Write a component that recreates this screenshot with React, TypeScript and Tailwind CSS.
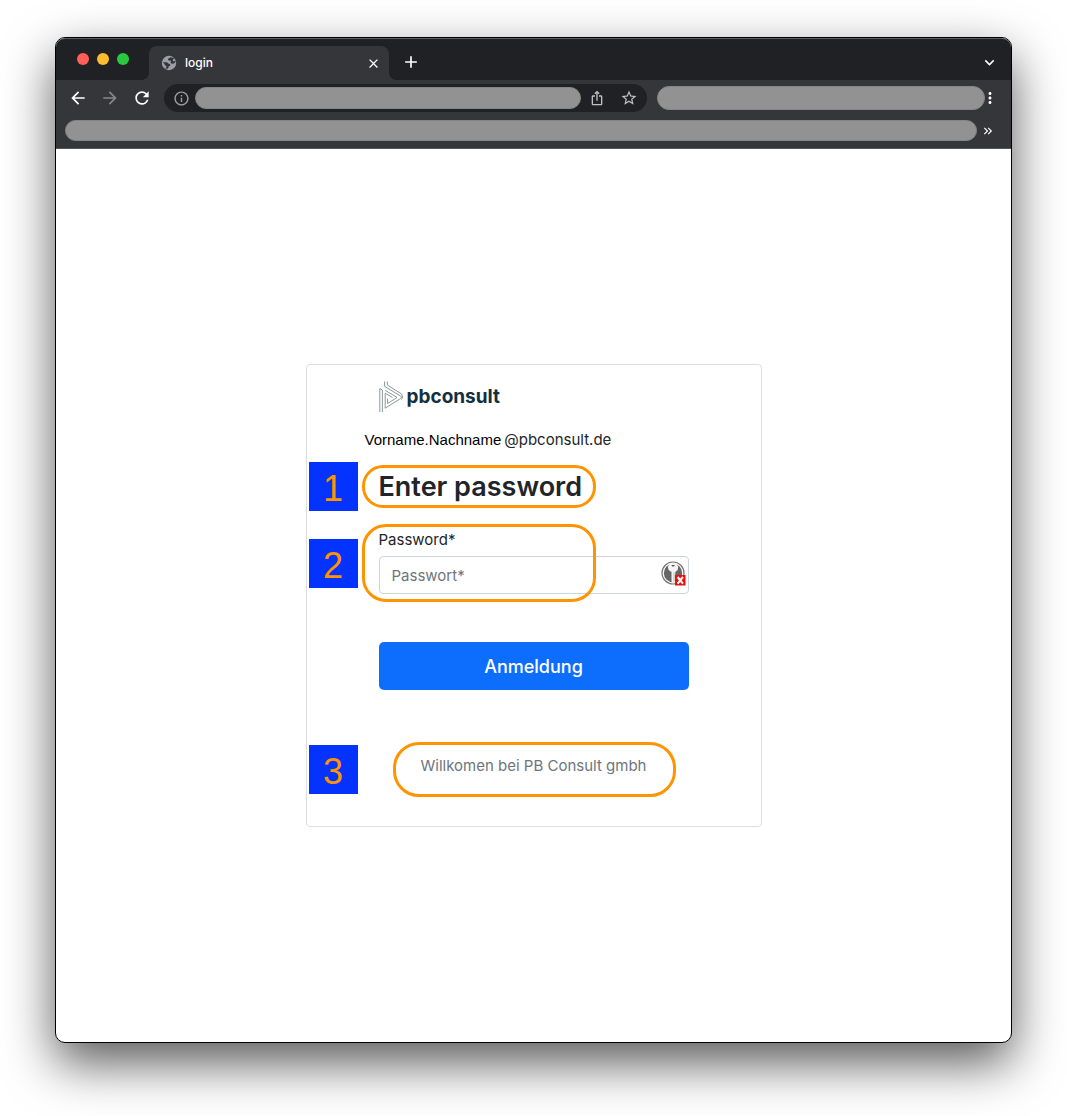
import type { ReactNode } from "react";
import {
  MdAdd,
  MdArrowBack,
  MdArrowForward,
  MdClose,
  MdExpandMore,
  MdInfoOutline,
  MdIosShare,
  MdKeyboardDoubleArrowRight,
  MdMoreVert,
  MdRefresh,
  MdStarBorder,
} from "react-icons/md";

function StepNumber({ children, className }: { children: ReactNode; className: string }) {
  return (
    <span
      className={`absolute flex size-[49px] items-center justify-center bg-[#0433ff] pt-1 font-['Liberation_Sans',Arial,sans-serif] text-[36px] leading-none text-[#ff9300] ${className}`}
    >
      {children}
    </span>
  );
}

function Highlight({ className }: { className: string }) {
  return <span className={`pointer-events-none absolute border-[3px] border-[#ff9300] ${className}`} />;
}

function GlobeIcon() {
  return (
    <svg width="16" height="16" viewBox="0 0 16 16" aria-hidden="true">
      <circle cx="8" cy="8" r="7.2" fill="#9aa0a6" />
      <path
        d="M9.8 2.2L7.4 3.6c-.8.7-.4 1.7.5 1.9l1.7.3c.7.4.4 1.5-.3 1.7l.9 1.1 2.1.2 1.9-1.2.5-1.1-.9-.6-1.1.5-.9-.7.2-1.3 1.3-.7A6.4 6.4 0 0 0 9.8 2.2z"
        fill="#35363a"
      />
      <path
        d="M1.7 7.2h3.4c1.6.1 2 .8 2.4 1.6l1.3.1c.8.5.7 1.6-.2 2.1l-1.1.4v1.3l-1.4 1.2A6.4 6.4 0 0 1 4 12.8h1.4v-1.6l-1.6-1.1-.4-1.2z"
        fill="#35363a"
      />
    </svg>
  );
}

function BrandMark() {
  return (
    <svg width="24" height="32" viewBox="0 0 24 32" fill="none" stroke="#8b979e" strokeWidth="1">
      <path d="M0.8 31V7.5L3.4 9V31" />
      <path d="M5.6 0.5V5.4L21.6 15Q23.6 16.2 21.6 17.5L6.2 27.2V12.2L13.4 16.4" />
      <path d="M8.3 0.5V4L22.6 13Q24.6 16.2 22.6 18.6" />
      <path d="M8.6 22.6V17.5M8.6 22.6L18 16.4L6.2 9.4" />
    </svg>
  );
}

function KeyBadge() {
  return (
    <svg width="25" height="25" viewBox="0 0 25 25" aria-hidden="true">
      <circle cx="12" cy="12" r="11" fill="#fff" stroke="#757575" strokeWidth="1.2" />
      <circle cx="12" cy="12" r="9.2" fill="#666" />
      <path d="M8.8 2.8h6.4l2 3-.5 3.2-2.4 2v9.8l-1.8 1.2-2-1.3v-9.7l-2.9-2L6.8 5.8z" fill="#f4f4f4" />
      <path d="M10.3 4h3.6l-1 1.4h-1.6z" fill="#555" />
      <path d="M13 11.5v9.3" stroke="#aaa" strokeWidth="0.8" />
      <rect x="14" y="14" width="10.5" height="10.5" fill="#f20d0d" />
      <path d="M16.6 16l5.3 6.6M21.9 16l-5.3 6.6" stroke="#fff" strokeWidth="2" />
    </svg>
  );
}

function TabStrip() {
  return (
    <div className="flex h-[42px] items-end rounded-t-[9px] border-t border-[#5c5d60] bg-[#202124] pr-3 pl-[21px]">
      <div className="mb-[15px] flex gap-2">
        <button aria-label="Close window" className="size-3 rounded-full bg-[#ff5f57]" />
        <button aria-label="Minimize window" className="size-3 rounded-full bg-[#febc2e]" />
        <button aria-label="Zoom window" className="size-3 rounded-full bg-[#28c840]" />
      </div>
      <div className="ml-3 size-2 bg-[radial-gradient(circle_at_0_0,#202124_8px,#35363a_8px)]" />
      <div className="flex h-[34px] w-60 items-center rounded-t-lg bg-[#35363a] pr-2 pl-3 text-white">
        <GlobeIcon />
        <span className="ml-2 flex-1 text-xs font-medium">login</span>
        <button aria-label="Close tab">
          <MdClose size={15} stroke="currentColor" />
        </button>
      </div>
      <div className="size-2 bg-[radial-gradient(circle_at_100%_0,#202124_8px,#35363a_8px)]" />
      <button aria-label="New tab" className="mb-2 ml-1 text-white">
        <MdAdd size={20} stroke="currentColor" />
      </button>
      <button aria-label="Search tabs" className="mb-2 ml-auto text-white">
        <MdExpandMore size={19} />
      </button>
    </div>
  );
}

function Toolbar() {
  return (
    <div className="flex h-9 items-center bg-[#35363a] px-3 text-white">
      <button aria-label="Back">
        <MdArrowBack size={20} />
      </button>
      <button aria-label="Forward" className="ml-3 text-[#87888b]">
        <MdArrowForward size={20} />
      </button>
      <button aria-label="Reload" className="ml-3">
        <MdRefresh size={20} />
      </button>
      <div className="ml-3 flex h-7 flex-[465] items-center rounded-full bg-[#202124] px-[9px] text-[#bdc1c6]">
        <MdInfoOutline size={17} className="shrink-0 text-[#9aa0a6]" />
        <input
          aria-label="Address"
          readOnly
          className="ml-[5px] h-[22px] min-w-0 flex-1 rounded-full border border-[#858585] bg-[#929292] px-3 text-xs"
        />
        <button aria-label="Share" className="ml-2">
          <MdIosShare size={16} />
        </button>
        <button aria-label="Bookmark this page" className="ml-[15px]">
          <MdStarBorder size={18} />
        </button>
      </div>
      <div className="mb-px ml-[10px] h-6 flex-[326] rounded-full border border-[#858585] bg-[#929292]" />
      <button aria-label="Menu" className="-ml-1">
        <MdMoreVert size={18} />
      </button>
    </div>
  );
}

function BookmarkBar() {
  return (
    <div className="flex h-[33px] items-center border-b border-[#55565a] bg-[#35363a] pr-4 pb-[3px] pl-[9px] text-white">
      <div className="h-[21px] flex-1 rounded-full border border-[#858585] bg-[#929292]" />
      <button aria-label="More bookmarks" className="ml-1">
        <MdKeyboardDoubleArrowRight size={14} stroke="currentColor" />
      </button>
    </div>
  );
}

function LoginCard() {
  return (
    <form
      onSubmit={(e) => e.preventDefault()}
      className="w-full max-w-[456px] rounded-[4px] border border-[#dcdddd] bg-white px-[72px] pt-4 pb-12 text-[15px] text-[#212529]"
    >
      <div className="flex h-8 items-center gap-1">
        <BrandMark />
        <span className="text-[19px] leading-7 font-bold text-[#12303f]">pbconsult</span>
      </div>
      <p className="mt-[15px] -ml-[14px] flex items-baseline gap-[3px] leading-6">
        <span className="font-['Liberation_Sans',Arial,sans-serif] text-black">Vorname.Nachname</span>
        <span>@pbconsult.de</span>
      </p>
      <div className="relative mt-[18px]">
        <h1 className="text-[27px] leading-[34px] font-semibold">Enter password</h1>
        <StepNumber className="-top-2 -left-[70px]">1</StepNumber>
        <Highlight className="-top-[5px] -left-[17px] h-[43px] w-[234px] rounded-[21px]" />
      </div>
      <div className="relative mt-6">
        <label htmlFor="password" className="block leading-6">
          Password*
        </label>
        <div className="relative mt-1">
          <input
            id="password"
            type="password"
            placeholder="Passwort*"
            className="h-[38px] w-full rounded-[4px] border border-[#ced4da] bg-white pr-9 pl-3 placeholder:text-[#6c757d]"
          />
          <span className="absolute top-[5px] right-[3px]">
            <KeyBadge />
          </span>
        </div>
        <StepNumber className="top-[11px] -left-[70px]">2</StepNumber>
        <Highlight className="-top-1 -left-[17px] h-[78px] w-[234px] rounded-[24px]" />
      </div>
      <button
        type="submit"
        className="mt-12 h-12 w-full rounded-[5px] bg-[#0d6efd] text-[18px] font-medium text-white"
      >
        Anmeldung
      </button>
      <div className="relative mt-16">
        <p className="text-center leading-6 text-[#6c757d]">Willkomen bei PB Consult gmbh</p>
        <StepNumber className="-top-[9px] -left-[70px]">3</StepNumber>
        <Highlight className="-top-3 left-[14px] h-[55px] w-[283px] rounded-[26px]" />
      </div>
    </form>
  );
}

export default function App() {
  return (
    <div className="flex min-h-screen bg-white px-[55px] pt-[37px] pb-[73px] font-['Inter',sans-serif]">
      <div className="flex flex-1 flex-col rounded-[10px] border border-black bg-white shadow-[0_20px_50px_rgba(0,0,0,0.65)]">
        <header>
          <TabStrip />
          <Toolbar />
          <BookmarkBar />
        </header>
        <main className="flex flex-1 items-center justify-center">
          <LoginCard />
        </main>
      </div>
    </div>
  );
}
